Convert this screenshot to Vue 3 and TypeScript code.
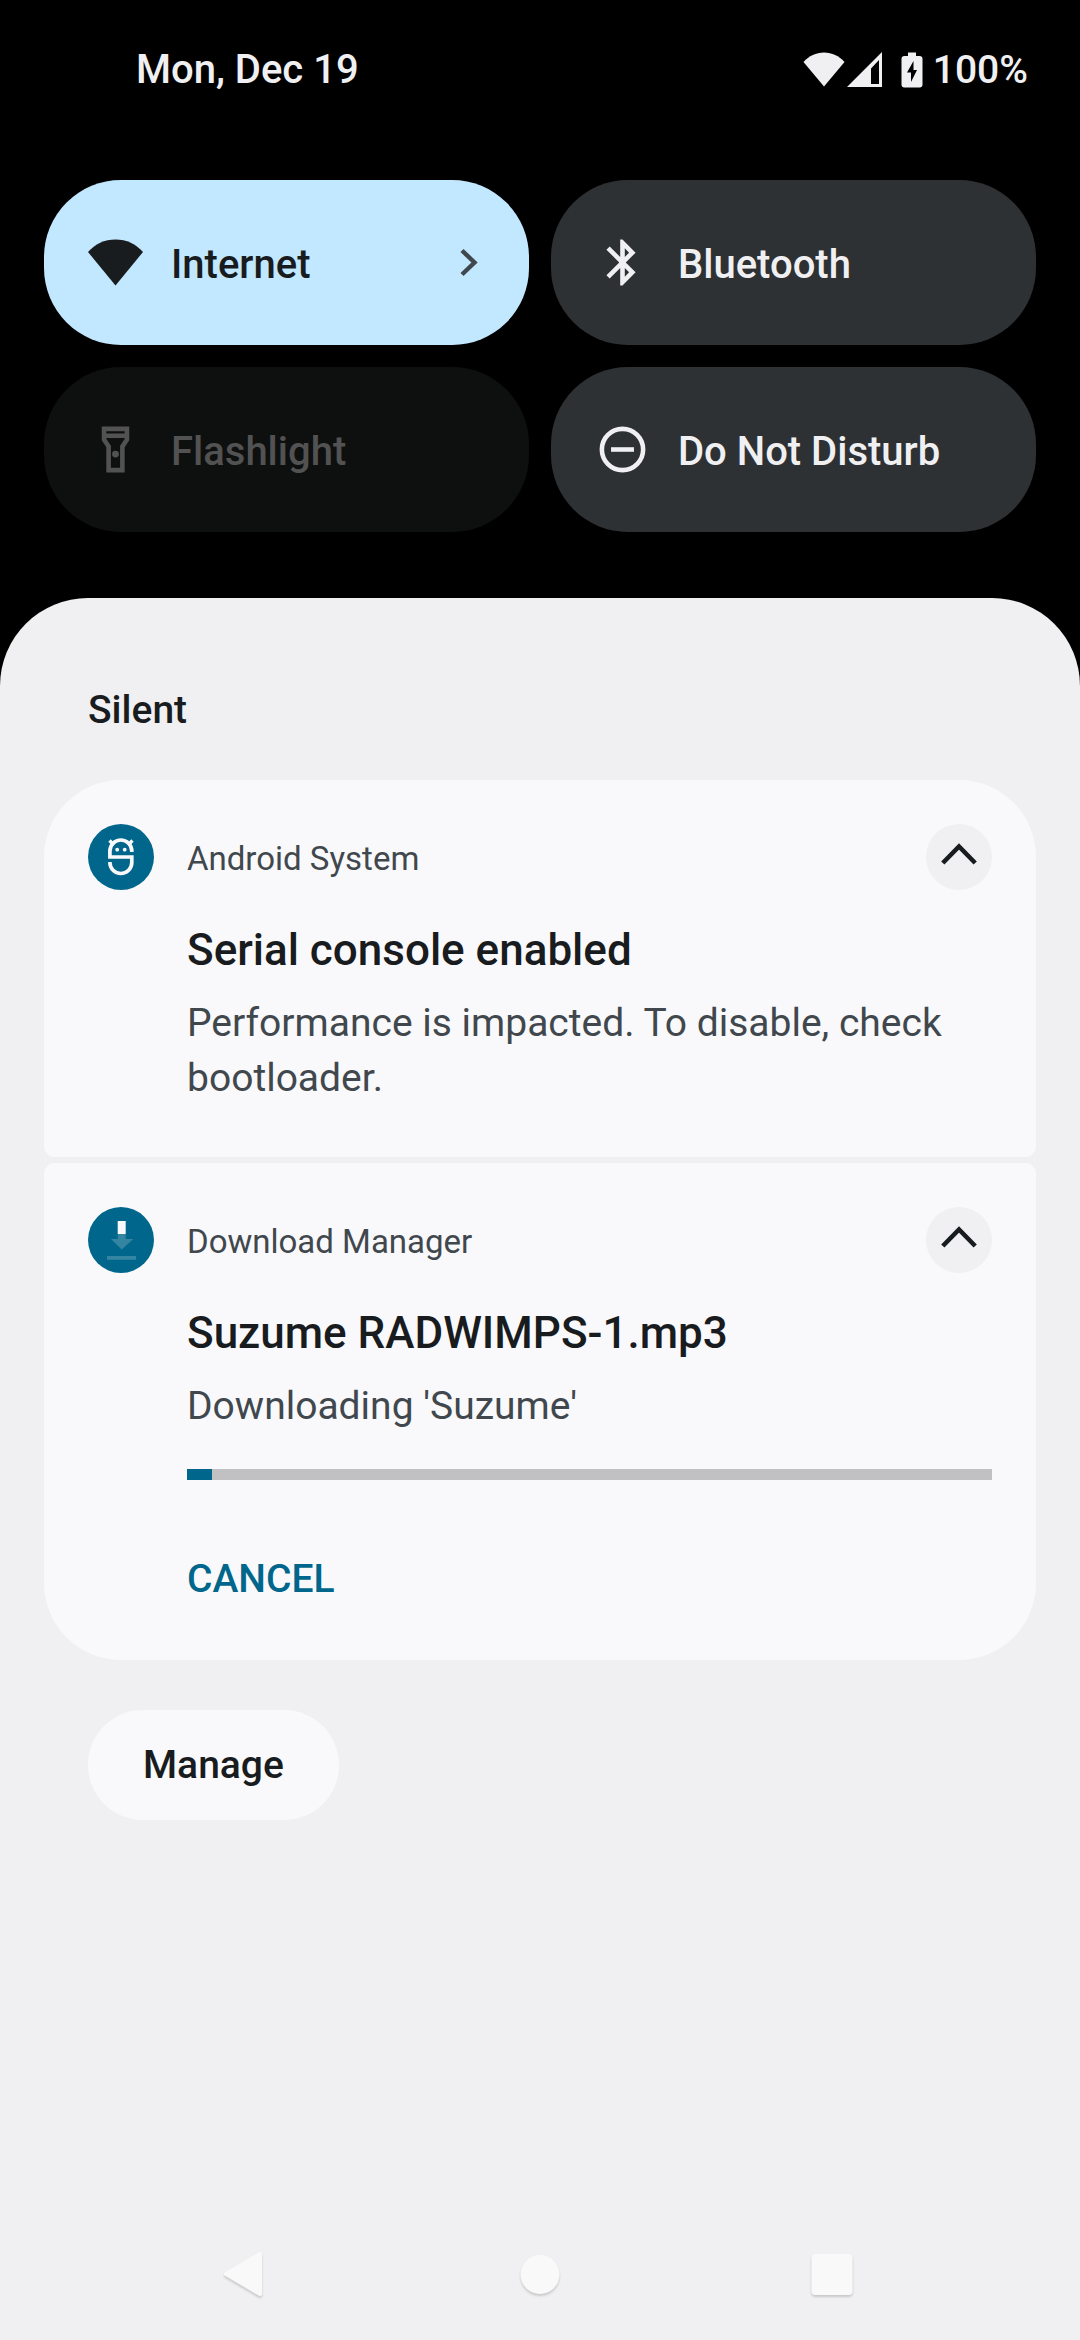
<script setup lang="ts">
import { ref } from 'vue'

type TileIcon = 'wifi' | 'bluetooth' | 'flashlight' | 'dnd'

interface Tile {
  id: TileIcon
  label: string
  state: 'active' | 'inactive' | 'unavailable'
  chevron?: boolean
}

interface Notice {
  id: 'system' | 'download'
  app: string
  title: string
  body: string
  progress?: number
  action?: string
}

const tiles = ref<Tile[]>([
  { id: 'wifi', label: 'Internet', state: 'active', chevron: true },
  { id: 'bluetooth', label: 'Bluetooth', state: 'inactive' },
  { id: 'flashlight', label: 'Flashlight', state: 'unavailable' },
  { id: 'dnd', label: 'Do Not Disturb', state: 'inactive' },
])

const notices = ref<Notice[]>([
  {
    id: 'system',
    app: 'Android System',
    title: 'Serial console enabled',
    body: 'Performance is impacted. To disable, check bootloader.',
  },
  {
    id: 'download',
    app: 'Download Manager',
    title: 'Suzume RADWIMPS-1.mp3',
    body: "Downloading 'Suzume'",
    progress: 3.1,
    action: 'CANCEL',
  },
])
</script>

<template>
  <div class="shade">
    <header class="status">
      <span class="date">Mon, Dec 19</span>
      <div class="status-end">
        <svg class="status-wifi" width="42" height="36" viewBox="0 0 42 36" aria-hidden="true">
          <path d="M21 34.500 0.500 10C6 4 13 .5 21 .5S36 4 41.500 10Z" fill="currentColor" />
        </svg>
        <svg class="status-cell" width="36" height="36" viewBox="0 0 36 36" aria-hidden="true">
          <path d="M35 0V35H0ZM32 8 24 16.500V32H32Z" fill="currentColor" fill-rule="evenodd" />
        </svg>
        <svg class="status-battery" width="22" height="36" viewBox="0 0 22 36" aria-hidden="true">
          <path
            d="M7 0.500H15V4H18.500A3 3 0 0 1 21.500 7V32.500A3 3 0 0 1 18.500 35.500H3.500A3 3 0 0 1 .5 32.500V7A3 3 0 0 1 3.500 4H7ZM12.500 9 6 20.500H10V30L16 18H12.500Z"
            fill="currentColor"
            fill-rule="evenodd"
          />
        </svg>
        <span>100%</span>
      </div>
    </header>

    <section class="tiles" aria-label="Quick settings">
      <button
        v-for="tile in tiles"
        :key="tile.id"
        type="button"
        class="tile"
        :class="tile.state"
        :disabled="tile.state === 'unavailable'"
      >
        <svg class="tile-icon" viewBox="0 0 55 55" aria-hidden="true">
          <path
            v-if="tile.id === 'wifi'"
            d="M27.500 50.500 0 17C7 9 16.500 4.500 27.500 4.500S48 9 55 17Z"
            fill="currentColor"
          />
          <g v-else-if="tile.id === 'bluetooth'" transform="scale(2.2917)">
            <path
              d="M17.71 7.71 12 2h-1v7.590L6.410 5 5 6.410 10.590 12 5 17.590 6.410 19 11 14.410V22h1l5.710-5.710-4.300-4.290 4.300-4.290zM13 5.830l1.880 1.880L13 9.590V5.830zm1.880 10.460L13 18.170v-3.760l1.880 1.880z"
              fill="currentColor"
            />
          </g>
          <g v-else-if="tile.id === 'flashlight'" transform="scale(2.2917)">
            <path
              d="M18 2H6v6l2 3v11h8V11l2-3V2zm-2 2v1H8V4h8zm-2 6.400V20h-4v-9.600L8 7.400V7h8v.4l-2 3z"
              fill="currentColor"
            />
            <circle cx="12" cy="14" r="1.500" fill="currentColor" />
          </g>
          <g v-else transform="scale(2.2917)">
            <circle cx="12" cy="12" r="9" fill="none" stroke="currentColor" stroke-width="2" />
            <path d="M7 11h10v2H7z" fill="currentColor" />
          </g>
        </svg>
        <span class="tile-label">{{ tile.label }}</span>
        <svg v-if="tile.chevron" class="tile-chevron" viewBox="0 0 55 55" aria-hidden="true">
          <path d="M21 15.500 33.500 27.500 21 39.500" fill="none" stroke="currentColor" stroke-width="4.400" />
        </svg>
      </button>
    </section>

    <main class="panel">
      <h1 class="section-title">Silent</h1>

      <div class="cards">
        <article v-for="notice in notices" :key="notice.id" class="card">
          <svg class="app-icon" viewBox="0 0 66 66" aria-hidden="true">
            <circle cx="33" cy="33" r="33" fill="#00668b" />
            <g v-if="notice.id === 'system'" stroke="#f9f9fc" fill="none">
              <path
                d="M43.800 28V27A10.950 11 0 0 0 21.900 27V33H43.800V38.500A10.950 11 0 0 1 21.900 38.500V38"
                stroke-width="3.700"
              />
              <path d="M21.500 16.500 26 21M44.500 16.500 40 21" stroke-width="3.400" />
              <circle cx="29.200" cy="25.700" r="1.900" fill="#f9f9fc" stroke="none" />
              <circle cx="36.700" cy="25.700" r="1.900" fill="#f9f9fc" stroke="none" />
            </g>
            <g v-else>
              <path d="M29.700 14H37.700V27H29.700Z" fill="#f9f9fc" />
              <path
                d="M29.700 27H37.700V32H45.300L33.700 42.500 23 32H29.700ZM19 49H48V52.700H19Z"
                fill="#3485a2"
              />
            </g>
          </svg>

          <div class="card-main">
            <div class="card-head">
              <span class="app-name">{{ notice.app }}</span>
              <button type="button" class="collapse" aria-label="Collapse">
                <svg viewBox="0 0 66 66" aria-hidden="true">
                  <path d="M16.800 39 33 22.500 49.200 39" fill="none" stroke="currentColor" stroke-width="4.600" />
                </svg>
              </button>
            </div>
            <h2 class="card-title">{{ notice.title }}</h2>
            <p class="card-body">{{ notice.body }}</p>
            <progress
              v-if="notice.progress !== undefined"
              class="bar"
              max="100"
              :value="notice.progress"
              :aria-label="notice.title"
            ></progress>
            <button v-if="notice.action" type="button" class="action">{{ notice.action }}</button>
          </div>
        </article>
      </div>

      <button type="button" class="manage">Manage</button>

      <nav class="nav" aria-label="System navigation">
        <button type="button" aria-label="Back">
          <svg viewBox="0 0 60 60" aria-hidden="true">
            <path d="M8 30 42 10V50Z" fill="currentColor" stroke="currentColor" stroke-width="4" stroke-linejoin="round" />
          </svg>
        </button>
        <button type="button" aria-label="Home">
          <svg viewBox="0 0 60 60" aria-hidden="true">
            <circle cx="30" cy="30.500" r="19.500" fill="currentColor" />
          </svg>
        </button>
        <button type="button" aria-label="Recent apps">
          <svg viewBox="0 0 60 60" aria-hidden="true">
            <rect x="9.500" y="10" width="41" height="41" rx="4" fill="currentColor" />
          </svg>
        </button>
      </nav>
    </main>
  </div>
</template>

<style>
body {
  margin: 0;
  background: #000;
}
</style>

<style scoped>
.shade {
  display: flex;
  flex-direction: column;
  min-height: 100vh;
  background: #000;
  color: #191c1e;
  font-family: Roboto, 'Noto Sans', sans-serif;
  font-size: 39px;
  font-weight: 500;
  line-height: 48px;
}

button {
  margin: 0;
  padding: 0;
  border: 0;
  background: none;
  color: inherit;
  font: inherit;
}

svg {
  display: block;
  flex: none;
}

.status {
  display: flex;
  align-items: center;
  justify-content: space-between;
  height: 140px;
  margin-bottom: 40px;
  padding: 0 52px 0 136px;
  color: #f0f0f3;
}

.date,
.tile-label {
  font-size: 40px;
}

.status-end {
  display: flex;
  align-items: center;
}

.status-cell {
  margin: 0 18px 0 2px;
}

.status-battery {
  margin-right: 10px;
}

.tiles {
  display: grid;
  grid-template-columns: 1fr 1fr;
  gap: 22px;
  padding: 0 44px;
}

.tile {
  display: flex;
  align-items: center;
  height: 165px;
  padding: 0 33px 0 44px;
  border-radius: 77px;
  text-align: left;
}

.tile.active {
  background: #c2e8ff;
  color: #191c1e;
}

.tile.inactive {
  background: #2e3133;
  color: #f0f0f3;
}

.tile.unavailable {
  background: #0e100f;
  color: #525252;
}

.tile-icon,
.tile-chevron {
  width: 55px;
  height: 55px;
}

.tile-chevron {
  color: #41484d;
}

.tile-label {
  flex: 1;
  padding: 4px 0 0 28px;
}

.panel {
  display: flex;
  flex: 1;
  flex-direction: column;
  align-items: flex-start;
  margin-top: 66px;
  padding: 88px 44px 0;
  border-radius: 88px 88px 0 0;
  background: #f0f0f2;
}

.section-title {
  margin: 0 44px 46px;
  font: inherit;
}

.cards {
  display: flex;
  flex-direction: column;
  align-self: stretch;
  gap: 6px;
}

.card {
  display: flex;
  gap: 33px;
  padding: 44px 44px 51px;
  border-radius: 11px;
  background: #f9f9fc;
}

.card:first-child {
  border-top-left-radius: 77px;
  border-top-right-radius: 77px;
}

.card:last-child {
  padding-bottom: 26px;
  border-bottom-right-radius: 77px;
  border-bottom-left-radius: 77px;
}

.app-icon {
  width: 66px;
  height: 66px;
}

.card-main {
  flex: 1;
  min-width: 0;
}

.card-head {
  display: flex;
  align-items: center;
  justify-content: space-between;
}

.app-name {
  padding-top: 4px;
  color: #41484d;
  font-size: 33px;
  font-weight: 400;
}

.collapse {
  width: 66px;
  height: 66px;
  border-radius: 50%;
  background: #f0f0f2;
}

.card-title {
  margin: 34px 0 20px;
  font-size: 44px;
  font-weight: 500;
  line-height: 52px;
}

.card-body {
  margin: 0;
  color: #41484d;
  font-weight: 400;
  line-height: 55px;
}

.bar {
  display: block;
  width: 100%;
  height: 11px;
  margin: 35px 0 44px;
  border: 0;
  appearance: none;
  background: #c1c1c3;
}

.bar::-webkit-progress-bar {
  background: #c1c1c3;
}

.bar::-webkit-progress-value {
  background: #00668b;
}

.action {
  display: block;
  height: 110px;
  color: #00668b;
}

.manage {
  height: 110px;
  margin: 50px 44px;
  padding: 0 55px;
  border-radius: 55px;
  background: #f9f9fc;
}

.nav {
  display: flex;
  align-self: stretch;
  justify-content: center;
  height: 132px;
  margin-top: auto;
}

.nav button {
  display: flex;
  align-items: center;
  justify-content: center;
  width: 292px;
  color: #f9f9f9;
}

.nav svg {
  width: 60px;
  height: 60px;
  filter: drop-shadow(0 2px 1px rgb(0 0 0 / 16%));
}
</style>
